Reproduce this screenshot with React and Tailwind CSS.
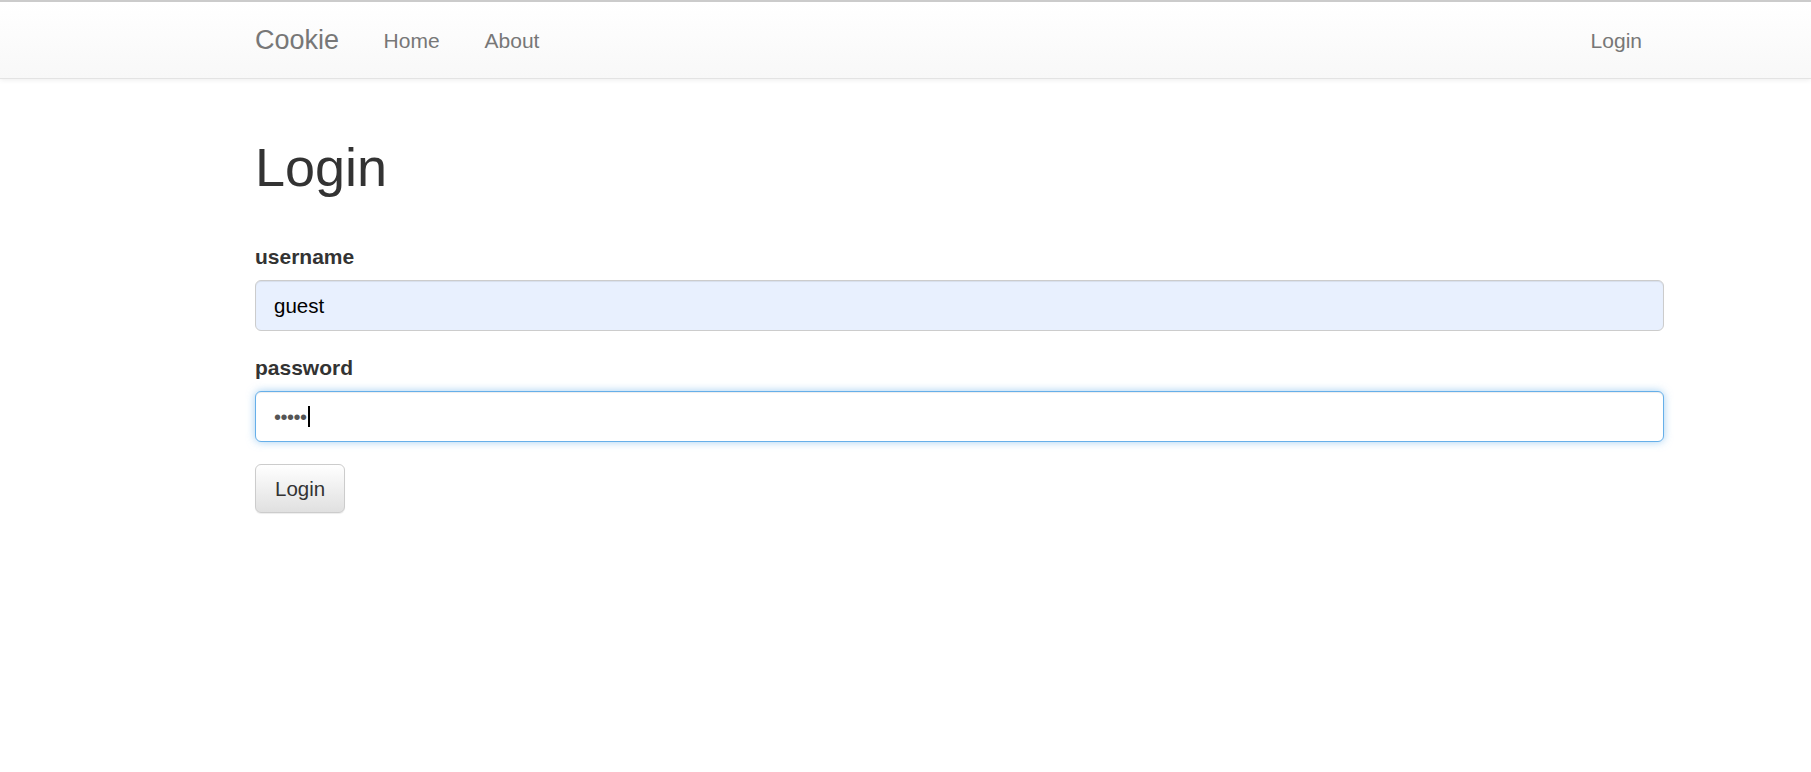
const font = { fontFamily: '"Liberation Sans", Arial, Helvetica, sans-serif' };

const NavBar = () => {
  return (
    <nav className="h-[79px] border-t-2 border-b border-t-[#cbcbcb] border-b-[#e3e3e3] bg-gradient-to-b from-white to-[#f8f8f8] shadow-[0_1px_5px_rgba(0,0,0,0.075)]">
      <div className="ml-[255px] w-[1409px] h-full flex items-center justify-between">
        <div className="flex items-center">
          <a className="text-[27px] leading-[27px] text-[#777] pr-[22px]">Cookie</a>
          <a className="text-[21px] leading-[21px] text-[#777] px-[22.5px] pt-[1px]">Home</a>
          <a className="text-[21px] leading-[21px] text-[#777] px-[22.5px] pt-[1px]">About</a>
        </div>
        <a className="text-[21px] leading-[21px] text-[#777] pl-[22px] pr-[22px] pt-[1px]">Login</a>
      </div>
    </nav>
  );
};

const App = () => {
  return (
    <div className="min-h-[772px] bg-white text-[#333]" style={font}>
      <NavBar />

      <main className="ml-[255px] w-[1409px]">
        {/* page title */}
        <h1 className="mt-[59px] text-[54px] leading-[58px] font-normal text-[#333]">Login</h1>

        <form className="mt-[46px]" onSubmit={(e) => e.preventDefault()}>
          {/* username */}
          <div>
            <label className="block text-[21px] leading-[29px] font-bold text-[#333] mb-[9px]">username</label>
            <input
              type="text"
              defaultValue="guest"
              readOnly
              className="block w-full h-[51px] px-[18px] text-[20.5px] text-black bg-[#e8f0fe] border border-[#cccccc] rounded-[6px] outline-none shadow-[inset_0_1px_1px_rgba(0,0,0,0.075)]"
              style={font}
            />
          </div>

          {/* password, shown focused */}
          <div className="mt-[22px]">
            <label className="block text-[21px] leading-[29px] font-bold text-[#333] mb-[9px]">password</label>
            <div className="flex items-center w-full h-[51px] px-[18px] bg-white border border-[#66afe9] rounded-[6px] shadow-[inset_0_1px_1px_rgba(0,0,0,0.075),0_0_8px_rgba(102,175,233,0.6)]">
              <span className="text-[20px] leading-[20px] text-[#555] tracking-[-0.5px]">•••••</span>
              <span className="w-[2px] h-[21px] bg-black ml-[1px]" />
            </div>
          </div>

          <button
            type="submit"
            className="mt-[22px] h-[49px] px-[19px] text-[20.5px] leading-[20px] text-[#333] border border-[#cccccc] rounded-[6px] bg-gradient-to-b from-white to-[#e0e0e0] shadow-[inset_0_1px_0_rgba(255,255,255,0.15),0_1px_1px_rgba(0,0,0,0.075)]"
            style={font}
          >
            Login
          </button>
        </form>
      </main>
    </div>
  );
};

export default App;
